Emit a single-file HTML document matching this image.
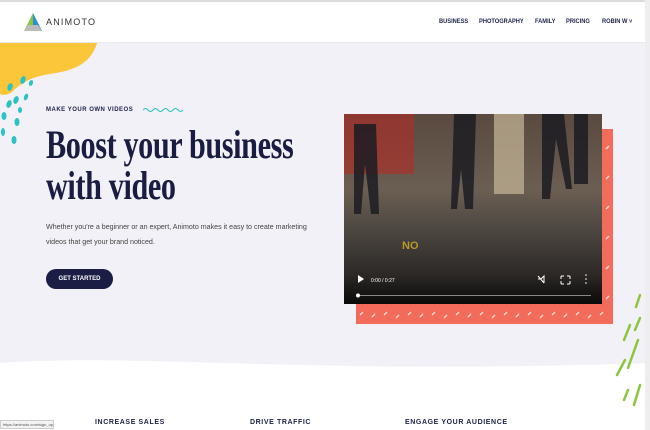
<!DOCTYPE html><html><head><style>
*{margin:0;padding:0;box-sizing:border-box}
body{width:650px;height:430px;overflow:hidden;background:#f2f1f7;font-family:"Liberation Sans",sans-serif;position:relative}
.hdr{position:absolute;left:0;top:0;width:650px;height:43px;background:#fff;border-top:2px solid #ddd;border-bottom:1px solid #e8e8ee}
.nav{position:absolute;top:18px;font-size:6.5px;font-weight:bold;color:#1d2248;transform:scaleX(.88);transform-origin:left top;white-space:nowrap}
.abs{position:absolute}
.title{position:absolute;left:46px;top:124px;font-family:"Liberation Serif",serif;font-weight:bold;font-size:40px;line-height:41px;color:#1a1c42;transform:scaleX(.755);transform-origin:left top;white-space:nowrap;letter-spacing:-.5px}
</style></head><body>
<svg class="abs" style="left:0;top:40px" width="110" height="110"><path d="M0 0 H98 C92 22 78 30 50 34 C30 37 20 44 12 52 C6 56 2 55 0 54 Z" fill="#fcc63a"/>
<g fill="#2cc1c4"><ellipse cx="23" cy="40" rx="2.5" ry="4" transform="rotate(20 23 40)"/><ellipse cx="31" cy="43" rx="2" ry="3" transform="rotate(20 31 43)"/><ellipse cx="10" cy="47" rx="2.5" ry="4" transform="rotate(20 10 47)"/><ellipse cx="16" cy="60" rx="2.5" ry="4" transform="rotate(20 16 60)"/><ellipse cx="26" cy="57" rx="2" ry="3.5" transform="rotate(20 26 57)"/><ellipse cx="9" cy="64" rx="2.5" ry="4" transform="rotate(20 9 64)"/><ellipse cx="20" cy="70" rx="2" ry="3"/><ellipse cx="4" cy="76" rx="2.5" ry="4"/><ellipse cx="17" cy="82" rx="2.5" ry="4"/><ellipse cx="14" cy="100" rx="2.5" ry="4"/><ellipse cx="3" cy="92" rx="2" ry="4"/></g></svg>
<div class="hdr"></div>
<svg class="abs" style="left:24px;top:13px" width="18" height="18"><polygon points="9,0 0,18 9,18" fill="#8cc63f"/><polygon points="9,0 18,18 9,18" fill="#2a8fd0"/><polygon points="0,18 18,18 14,12 4,12" fill="#bbb"/></svg>
<div class="abs" style="left:46px;top:17px;font-size:9px;letter-spacing:1.2px;color:#333">ANIMOTO</div>
<div class="nav" style="left:439px">BUSINESS</div>
<div class="nav" style="left:479px">PHOTOGRAPHY</div>
<div class="nav" style="left:535px">FAMILY</div>
<div class="nav" style="left:566px">PRICING</div>
<div class="nav" style="left:602px">ROBIN W ˅</div>
<div class="abs" style="left:46px;top:107px;font-size:6px;font-weight:bold;letter-spacing:.5px;color:#1d2248">MAKE YOUR OWN VIDEOS</div>
<svg class="abs" style="left:143px;top:107px" width="42" height="6"><path d="M0 3 q2.5 -3 5 0 t5 0 t5 0 t5 0 t5 0 t5 0 t5 0 t5 0" stroke="#2cc1c4" fill="none" stroke-width="1"/></svg>
<div class="title">Boost your business<br>with video</div>
<div class="abs" style="left:46px;top:220px;font-size:7.1px;line-height:15px;color:#444;white-space:nowrap">Whether you're a beginner or an expert, Animoto makes it easy to create marketing<br>videos that get your brand noticed.</div>
<div class="abs" style="left:46px;top:269px;width:67px;height:20px;border-radius:10px;background:#1b1d45;color:#fff;font-size:6px;font-weight:bold;text-align:center;line-height:20px">GET STARTED</div>
<div class="abs" style="left:356px;top:129px;width:257px;height:195px;background:#f26b5b"></div>
<svg class="abs" style="left:356px;top:129px" width="257" height="195"><g stroke="#fff" stroke-width="1.3" opacity=".8"><path d="M4 186 l3 -3M16 188 l3 -3M28 186 l3 -3M40 189 l3 -3M52 186 l3 -3M64 188 l3 -3M76 186 l3 -3M88 189 l3 -3M100 186 l3 -3M112 188 l3 -3M124 186 l3 -3M136 189 l3 -3M148 186 l3 -3M160 188 l3 -3M172 186 l3 -3M184 189 l3 -3M196 186 l3 -3M208 188 l3 -3M220 186 l3 -3M232 189 l3 -3M244 186 l3 -3M250 20 l3 -3M250 50 l3 -3M250 80 l3 -3M250 110 l3 -3M250 140 l3 -3M250 170 l3 -3"/></g></svg>
<div class="abs" style="left:344px;top:114px;width:258px;height:190px;background:linear-gradient(#5a4a40 0%,#6b5e52 40%,#4e4842 60%,#2b2826 85%,#0a0a0a 100%)"></div>
<svg class="abs" style="left:344px;top:114px" width="258" height="190"><rect x="0" y="0" width="70" height="60" fill="#b22b26" opacity=".6"/><rect x="150" y="0" width="30" height="80" fill="#c7b89a" opacity=".7"/><g fill="#1c1c22" opacity=".85"><path d="M110 0 h22 l-3 95 h-8 l-4 -40 l-4 40 h-6z"/><path d="M198 0 h22 l8 75 h-6 l-10 -50 l-6 60 h-8z"/><rect x="230" y="0" width="14" height="70"/><path d="M10 10 h22 l3 90 h-8 l-6 -50 l-4 50 h-7z"/></g><text x="58" y="135" font-family="Liberation Sans" font-weight="bold" font-size="11" fill="#b8982c">NO</text><path d="M14 161 l6 4 l-6 4z" fill="#fff"/><text x="27" y="168" font-size="5" fill="#fff" font-family="Liberation Sans">0:00 / 0:27</text><path d="M194 162 l6 7 M194 165 h3 l3 -3 v7" stroke="#fff" fill="none"/><path d="M217 162 h3 M217 162 v3 M226 162 h-3 M226 162 v3 M217 170 h3 M217 170 v-3 M226 170 h-3 M226 170 v-3" stroke="#fff"/><circle cx="242" cy="161" r=".8" fill="#fff"/><circle cx="242" cy="165" r=".8" fill="#fff"/><circle cx="242" cy="169" r=".8" fill="#fff"/><rect x="14" y="181" width="233" height="1" fill="#888"/><circle cx="14" cy="181.5" r="2" fill="#fff"/></svg>
<svg class="abs" style="left:0;top:355px" width="650" height="75"><path d="M0 8 C150 -2 300 20 650 8 V75 H0Z" fill="#fff"/></svg>
<svg class="abs" style="left:600px;top:290px" width="45" height="130"><g stroke="#8cc63f" stroke-width="2.5" stroke-linecap="round"><path d="M40 5 l-4 12M30 35 l-6 15M40 28 l-5 12M38 50 l-10 28M25 70 l-8 15M28 100 l-4 10M40 95 l-6 20"/></g></svg>
<div class="abs" style="left:95px;top:419px;font-size:7px;font-weight:bold;letter-spacing:.6px;color:#1d2248">INCREASE SALES</div>
<div class="abs" style="left:250px;top:419px;font-size:7px;font-weight:bold;letter-spacing:.6px;color:#1d2248">DRIVE TRAFFIC</div>
<div class="abs" style="left:405px;top:419px;font-size:7px;font-weight:bold;letter-spacing:.6px;color:#1d2248">ENGAGE YOUR AUDIENCE</div>
<div class="abs" style="left:0;top:420px;width:54px;height:9px;background:#f4f4f4;border:1px solid #ccc;font-size:4px;color:#555;padding-left:2px;line-height:7px">https://animoto.com/sign_up</div>
<div class="abs" style="left:645px;top:0;width:5px;height:430px;background:#eee"></div>
</body></html>
